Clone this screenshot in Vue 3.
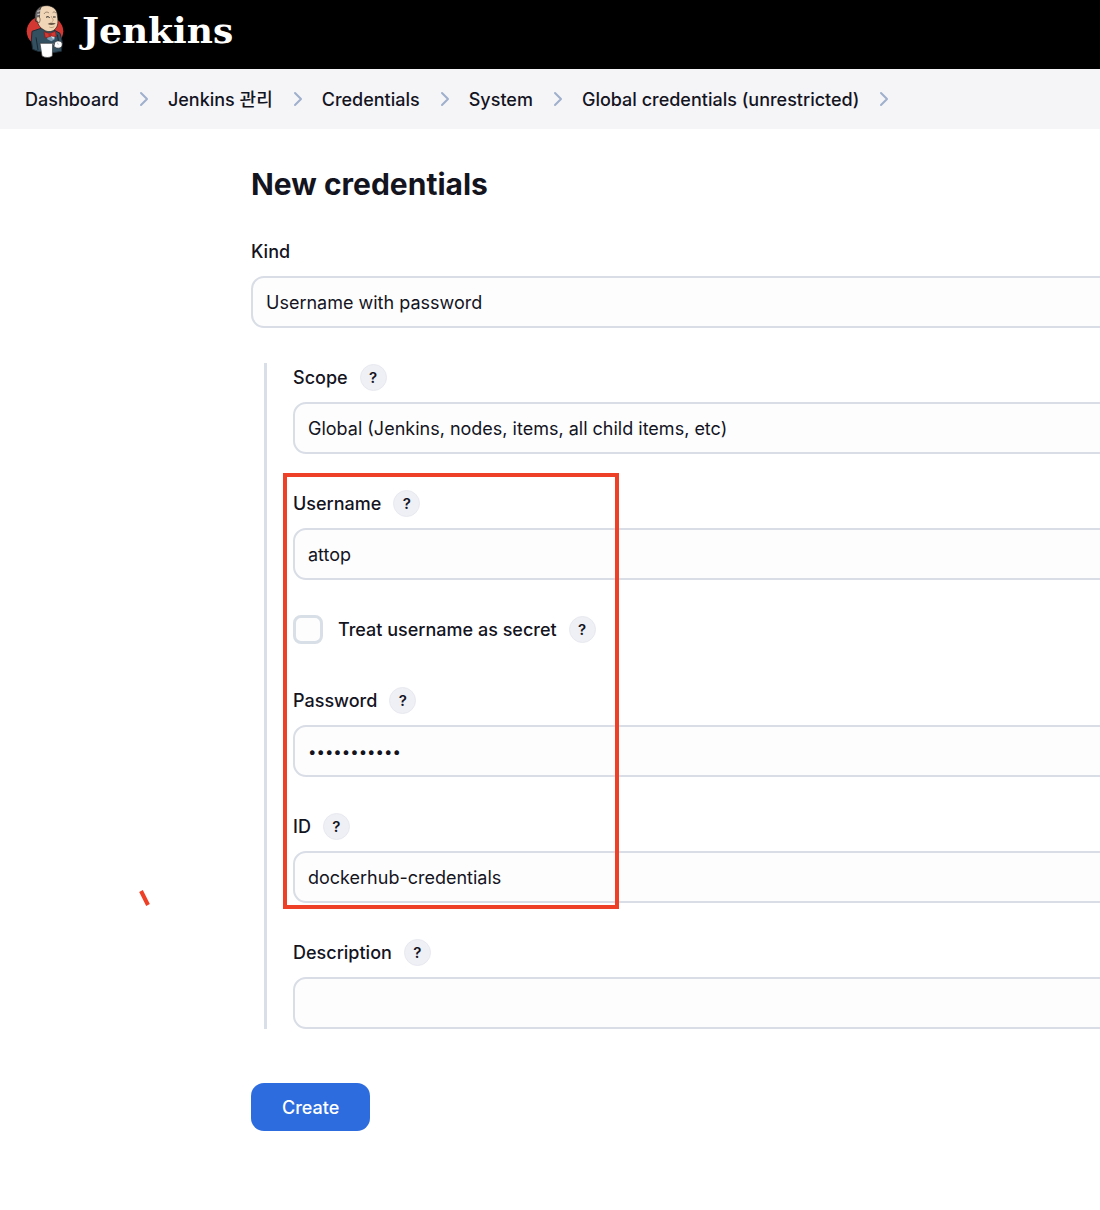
<template>
  <div class="page">
    <header class="header">
      <a href="#" class="brand">
        <svg class="brand-logo" width="52" height="64" viewBox="0 0 156 192" aria-hidden="true">
          <ellipse cx="75" cy="94" rx="55" ry="48" fill="#d33833" />
          <path d="M36 94 L60 86 L98 88 L120 100 L127 126 L124 154 L98 158 L54 154 L38 148 L34 120 Z" fill="#335061" stroke="#1d2b36" stroke-width="3" />
          <path d="M48 112 L54 150 M112 104 L116 126" fill="none" stroke="#1b2833" stroke-width="3" />
          <path d="M80 100 L106 98 L104 118 L94 124 L82 118 Z" fill="#7d9cb2" />
          <path d="M92 108 L104 108 L100 118 Z" fill="#dfe5ea" />
          <path d="M48 42 C48 26 62 16 82 17 C100 18 112 30 112 46 C114 58 116 74 108 84 C100 96 84 98 72 90 C60 84 54 74 52 64 Z" fill="#f0d6b7" stroke="#231f20" stroke-width="2" />
          <path d="M47 64 C42 44 46 26 66 19 C56 30 60 40 58 52 L56 66 Z" fill="#6d6b6d" stroke="#231f20" stroke-width="2" />
          <path d="M50 52 C58 46 64 56 58 68 C52 68 48 60 50 52 Z" fill="#f0d6b7" stroke="#5b4a3c" stroke-width="2" />
          <path d="M52 44 L60 42 M52 34 L62 32" stroke="#d5d5d5" stroke-width="3" />
          <path d="M72 42 C76 35 82 35 87 39 M98 38 C102 34 106 36 108 40" fill="none" stroke="#6b5646" stroke-width="2" />
          <path d="M78 52 C82 49 86 50 89 53 M99 51 L107 51" fill="none" stroke="#231f20" stroke-width="3" />
          <path d="M94 48 C94 56 104 58 97 65" fill="none" stroke="#a8835f" stroke-width="2" />
          <path d="M83 72 C89 67 98 67 107 70 C103 76 91 77 83 72 Z" fill="#6b5646" />
          <path d="M88 81 C93 84 100 83 103 79" fill="none" stroke="#a8835f" stroke-width="2" />
          <path d="M72 95 L88 101 L106 94 L109 110 L94 108 L76 114 Z" fill="#d33833" stroke="#7c1d1b" stroke-width="2" />
          <circle cx="90" cy="104" r="5" fill="#ad2925" />
          <path d="M60 130 L98 130 L97 168 C88 174 76 174 66 168 Z" fill="#ffffff" stroke="#333333" stroke-width="2" />
          <path d="M104 128 C110 120 124 122 126 130 C128 140 122 146 110 144 L102 140 Z" fill="#ffffff" stroke="#333333" stroke-width="2" />
          <path d="M112 128 L115 134 M99 130 L105 139" stroke="#9aa3aa" stroke-width="2" />
        </svg>
        <span class="brand-name">Jenkins</span>
      </a>
    </header>

    <nav class="breadcrumbs" aria-label="Breadcrumb">
      <ol>
        <li v-for="crumb in breadcrumbs" :key="crumb">
          <a href="#">{{ crumb }}</a>
          <svg class="chevron" width="10" height="16" viewBox="0 0 10 16" aria-hidden="true">
            <path d="M2 2 L8 8 L2 14" />
          </svg>
        </li>
      </ol>
    </nav>

    <main class="main">
      <h1>New credentials</h1>

      <form @submit.prevent>
        <div class="field">
          <div class="field-label">
            <label for="kind">Kind</label>
          </div>
          <select id="kind" v-model="form.kind" class="control">
            <option>Username with password</option>
          </select>
        </div>

        <div class="nested">
          <div class="field">
            <div class="field-label">
              <label for="scope">Scope</label>
              <button type="button" class="help" aria-label="Help for Scope">?</button>
            </div>
            <select id="scope" v-model="form.scope" class="control">
              <option>Global (Jenkins, nodes, items, all child items, etc)</option>
            </select>
          </div>

          <div class="highlighted">
            <div class="field">
              <div class="field-label">
                <label for="username">Username</label>
                <button type="button" class="help" aria-label="Help for Username">?</button>
              </div>
              <input id="username" v-model="form.username" type="text" class="control" />
            </div>

            <div class="check-row">
              <input id="secret" v-model="form.usernameSecret" type="checkbox" class="checkbox" />
              <label for="secret">Treat username as secret</label>
              <button type="button" class="help" aria-label="Help for Treat username as secret">?</button>
            </div>

            <div class="field">
              <div class="field-label">
                <label for="password">Password</label>
                <button type="button" class="help" aria-label="Help for Password">?</button>
              </div>
              <input id="password" v-model="form.password" type="password" class="control control-password" />
            </div>

            <div class="field">
              <div class="field-label">
                <label for="credential-id">ID</label>
                <button type="button" class="help" aria-label="Help for ID">?</button>
              </div>
              <input id="credential-id" v-model="form.id" type="text" class="control" />
            </div>
          </div>

          <div class="field">
            <div class="field-label">
              <label for="description">Description</label>
              <button type="button" class="help" aria-label="Help for Description">?</button>
            </div>
            <input id="description" v-model="form.description" type="text" class="control" />
          </div>
        </div>

        <button type="submit" class="create-btn">Create</button>
      </form>
    </main>

    <!-- Pen mark -->
    <svg class="pen-mark" width="12" height="18" viewBox="0 0 12 18" aria-hidden="true">
      <path d="M2 1 L9 15" />
    </svg>
  </div>
</template>

<script setup>
import { reactive } from 'vue'

const breadcrumbs = [
  'Dashboard',
  'Jenkins 관리',
  'Credentials',
  'System',
  'Global credentials (unrestricted)'
]

const form = reactive({
  kind: 'Username with password',
  scope: 'Global (Jenkins, nodes, items, all child items, etc)',
  username: 'attop',
  usernameSecret: false,
  password: 'password123',
  id: 'dockerhub-credentials',
  description: ''
})
</script>

<style>
body {
  margin: 0;
  background: #ffffff;
}
</style>

<style scoped>
.page {
  position: relative;
  min-height: 100vh;
  overflow: hidden;
  box-sizing: border-box;
  color: #14141f;
  font-family: Inter, "Noto Sans CJK KR", sans-serif;
  font-size: 18px;
  line-height: 27px;
}

/* Header */
.header {
  height: 69px;
  padding-left: 20px;
  background: #000000;
}

.brand {
  display: inline-flex;
  align-items: flex-start;
  gap: 10px;
  color: #ffffff;
  text-decoration: none;
}

.brand-name {
  font-family: "DejaVu Serif", serif;
  font-size: 36px;
  font-weight: 700;
  line-height: 60px;
}

/* Breadcrumbs */
.breadcrumbs {
  padding: 0 25px;
  background: #f5f5f8;
}

.breadcrumbs ol {
  display: flex;
  align-items: center;
  height: 60px;
  margin: 0;
  padding: 0;
  list-style: none;
}

.breadcrumbs li {
  display: flex;
  align-items: center;
  white-space: nowrap;
}

.breadcrumbs a {
  color: inherit;
  font-weight: 500;
  text-decoration: none;
}

.chevron {
  margin: 0 19px 0 20px;
}

.chevron path {
  fill: none;
  stroke: #9fb0cc;
  stroke-width: 2;
  stroke-linecap: round;
  stroke-linejoin: round;
}

/* Form */
.main {
  margin-right: -24px;
  padding: 35px 0 79px 251px;
}

h1 {
  margin: 0 0 33px;
  font-size: 30px;
  font-weight: 700;
  line-height: 40px;
}

.field {
  margin-bottom: 35px;
}

.field-label {
  display: flex;
  align-items: center;
  gap: 12px;
  height: 29px;
  margin-bottom: 10px;
}

label {
  font-weight: 500;
}

.help {
  width: 27px;
  height: 27px;
  padding: 0;
  border: 1px solid #e8e9f0;
  border-radius: 50%;
  background: #eff0f5;
  color: #14141f;
  font-family: inherit;
  font-size: 15px;
  font-weight: 600;
  line-height: 24px;
  cursor: pointer;
}

.control {
  display: block;
  width: 100%;
  height: 52px;
  box-sizing: border-box;
  margin: 0;
  padding: 0 13px;
  border: 2px solid #d8dde6;
  border-radius: 13px;
  outline: none;
  background: #fdfdfd;
  color: #14141f;
  font-family: inherit;
  font-size: 18px;
  appearance: none;
}

.control:focus {
  border-color: #2d6cdf;
}

.control-password {
  font-size: 15px;
}

.nested {
  margin-left: 13px;
  padding-left: 26px;
  border-left: 3px solid #d8dfe7;
}

.nested > .field:last-child {
  margin-bottom: 0;
}

.check-row {
  display: flex;
  align-items: center;
  height: 29px;
  margin-bottom: 42px;
}

.check-row label {
  margin: 0 12px 0 15px;
}

.checkbox {
  width: 30px;
  height: 29px;
  margin: 0;
  border: 3px solid #d8dfe7;
  border-radius: 8px;
  background: #fdfdfd;
  appearance: none;
}

.checkbox:checked {
  border-color: #2d6cdf;
  background: #2d6cdf;
}

/* Red frame around the fields to fill in */
.highlighted {
  position: relative;
}

.highlighted::after {
  content: "";
  position: absolute;
  top: -16px;
  bottom: -6px;
  left: -10px;
  width: 336px;
  box-sizing: border-box;
  border: 4px solid #ee4027;
  pointer-events: none;
}

.highlighted > .field:last-child {
  margin-bottom: 0;
}

.highlighted + .field {
  margin-top: 35px;
}

.create-btn {
  height: 48px;
  margin-top: 54px;
  padding: 0 31px;
  border: none;
  border-radius: 13px;
  background: #2d6cdf;
  color: #ffffff;
  font-family: inherit;
  font-size: 18px;
  font-weight: 500;
  cursor: pointer;
}

.create-btn:hover {
  background: #255dc4;
}

.pen-mark {
  position: absolute;
  top: 890px;
  left: 139px;
}

.pen-mark path {
  fill: none;
  stroke: #ee4027;
  stroke-width: 4;
}
</style>
